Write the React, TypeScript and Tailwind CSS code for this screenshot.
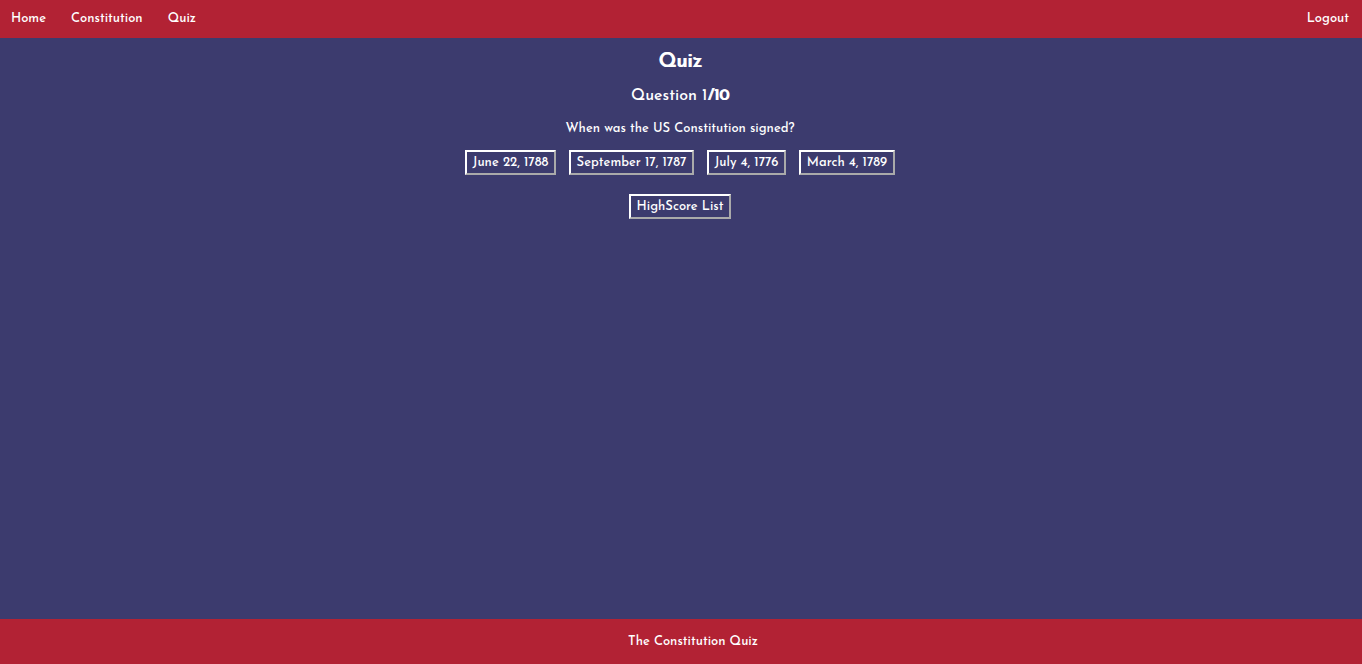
import type { ReactNode } from "react";

const answers = [
  { text: "June 22, 1788", width: "min-w-[91px]" },
  { text: "September 17, 1787", width: "min-w-[125px]" },
  { text: "July 4, 1776", width: "min-w-[79px]" },
  { text: "March 4, 1789", width: "min-w-[96px]" },
];

function NavLink({ children }: { children: ReactNode }) {
  return (
    <a href="#" className="hover:underline">
      {children}
    </a>
  );
}

function QuizButton({ children, width }: { children: ReactNode; width: string }) {
  return (
    <button
      type="button"
      className={`h-[25px] border-2 border-t-white border-l-white border-r-[#aaaaaa] border-b-[#aaaaaa] text-center whitespace-nowrap ${width}`}
    >
      {children}
    </button>
  );
}

export default function App() {
  return (
    <div className="flex min-h-screen flex-col bg-[#3c3b6e] font-['Josefin_Sans',Lato,sans-serif] text-[13px] leading-5 font-medium text-white">
      <nav className="flex h-[38px] items-center justify-between bg-[#b22234] pr-[13px] pl-[11px]">
        <div className="flex gap-[25px]">
          <NavLink>Home</NavLink>
          <NavLink>Constitution</NavLink>
          <NavLink>Quiz</NavLink>
        </div>
        <NavLink>Logout</NavLink>
      </nav>
      <main className="flex flex-1 flex-col items-center pt-2.5 pr-0.5">
        <h1 className="text-xl leading-7 [text-shadow:1px_0_0_white]">Quiz</h1>
        <h2 className="mt-2 text-base leading-6">
          Question 1<span className="[text-shadow:1px_0_0_white]">/10</span>
        </h2>
        <p className="mt-[11px]">When was the US Constitution signed?</p>
        <div className="mt-[11px] flex flex-wrap justify-center gap-[13px]">
          {answers.map((answer) => (
            <QuizButton key={answer.text} width={answer.width}>
              {answer.text}
            </QuizButton>
          ))}
        </div>
        <div className="mt-[19px] flex">
          <QuizButton width="min-w-[102px]">HighScore List</QuizButton>
        </div>
      </main>
      <footer className="flex h-[45px] items-center justify-center bg-[#b22234] pl-6">
        <p>The Constitution Quiz</p>
      </footer>
    </div>
  );
}
